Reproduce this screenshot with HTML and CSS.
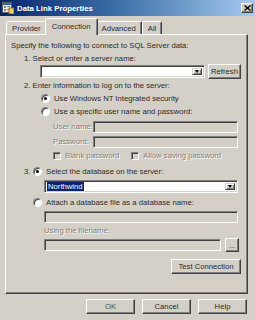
FILE: index.html
```html
<!DOCTYPE html>
<html>
<head>
<meta charset="utf-8">
<link rel="stylesheet" href="styles.css">
</head>
<body>
<div class="win">
  <div class="titlebar">
    <svg class="appicon" width="12" height="12" viewBox="0 0 12 12">
      <rect x="0.5" y="0.5" width="9" height="10" fill="#e8e8e8" stroke="#606060"/>
      <rect x="1" y="1" width="8" height="2" fill="#3060c0"/>
      <rect x="2" y="4" width="2" height="2" fill="#808080"/>
      <rect x="5" y="4" width="3" height="1" fill="#808080"/>
      <rect x="2" y="7" width="2" height="2" fill="#808080"/>
      <rect x="5" y="7" width="3" height="1" fill="#808080"/>
      <rect x="7" y="6" width="5" height="6" fill="#f0d060" stroke="#806000" stroke-width="0.8"/>
    </svg>
    <span class="title">Data Link Properties</span>
    <span class="close">
      <svg width="7" height="6" viewBox="0 0 7 6"><path d="M0.5 0.5 L6.5 5.5 M6.5 0.5 L0.5 5.5" stroke="#000" stroke-width="1.4"/></svg>
    </span>
  </div>

  <div class="tabs">
    <span class="tab">Provider</span>
    <span class="tab sel">Connection</span>
    <span class="tab">Advanced</span>
    <span class="tab">All</span>
  </div>

  <div class="panel">
    <p class="txt intro">Specify the following to connect to SQL Server data:</p>
    <p class="txt step">1. Select or enter a server name:</p>
    <div class="server">
      <div class="combo"><span class="combo-val"></span><span class="ddbtn"><span class="arrow"></span></span></div>
      <span class="btn refresh">Refresh</span>
    </div>
    <p class="txt step">2. Enter information to log on to the server:</p>
    <div class="opt login"><span class="radio on"></span>Use Windows NT Integrated security</div>
    <div class="opt login"><span class="radio"></span>Use a specific user name and password:</div>
    <div class="field"><span class="lbl dis">User name:</span><span class="box"></span></div>
    <div class="field pw"><span class="lbl dis">Password:</span><span class="box"></span></div>
    <div class="checks">
      <span class="chk dis"><span class="check"></span>Blank password</span>
      <span class="chk dis allow"><span class="check"></span>Allow saving password</span>
    </div>
    <div class="opt step3"><span class="num">3.</span><span class="radio on"></span>Select the database on the server:</div>
    <div class="combo db"><span class="combo-val"><span class="selected">Northwind</span></span><span class="ddbtn"><span class="arrow"></span></span></div>
    <div class="opt attach"><span class="radio"></span>Attach a database file as a database name:</div>
    <span class="box attachbox"></span>
    <p class="dis using">Using the filename:</p>
    <div class="filerow"><span class="box"></span><span class="btn dots">...</span></div>
    <div class="testrow"><span class="btn test">Test Connection</span></div>
  </div>

  <div class="buttons">
    <span class="btn dlg ok">OK</span>
    <span class="btn dlg">Cancel</span>
    <span class="btn dlg">Help</span>
  </div>
</div>
</body>
</html>
```

FILE: styles.css
```css
* { box-sizing: border-box; margin: 0; padding: 0; }
html, body { width: 255px; height: 320px; overflow: hidden; }
body {
  background: #d4d0c8;
  font-family: "Liberation Sans", Arial, sans-serif;
  font-size: 7.7px;
  color: #2a2a2a;
}
.win { width: 255px; height: 320px; }

.titlebar {
  height: 16px;
  background: linear-gradient(to right, #0a246a 0%, #3a6ea5 45%, #a6caf0 100%);
  display: flex;
  align-items: center;
  padding: 0 2px 0 2px;
}
.appicon { width: 12px; height: 12px; margin-right: 3px; flex: none; }
.title { color: #fff; font-weight: bold; font-size: 7.8px; flex: 1; }
.close {
  width: 12px; height: 10px;
  background: #d4d0c8;
  border: 1px solid;
  border-color: #fff #404040 #404040 #fff;
  box-shadow: inset -1px -1px #808080;
  display: flex; align-items: center; justify-content: center;
}

.tabs {
  height: 18px;
  display: flex;
  align-items: flex-end;
  padding-left: 6px;
  position: relative;
  z-index: 1;
}
.tab {
  height: 13px;
  padding: 0 5px;
  border: 1px solid;
  border-bottom: none;
  border-color: #fff #404040 transparent #fff;
  border-radius: 2px 2px 0 0;
  box-shadow: inset -1px 0 #808080;
  display: flex;
  align-items: center;
  background: #d4d0c8;
}
.tab.sel {
  height: 17px;
  margin: 0 -2px -1px -2px;
  padding: 0 6px 2px 6px;
  position: relative;
  z-index: 2;
}

.panel {
  margin-left: 5px;
  width: 243px;
  height: 260px;
  border: 1px solid;
  border-color: #fff #404040 #404040 #fff;
  box-shadow: inset -1px -1px #808080;
  padding: 5px 6px 0 5px;
  display: flex;
  flex-direction: column;
}
.txt { height: 12px; line-height: 12px; }
.step { padding-left: 13px; margin-top: 1px; }
.intro { margin-top: 0; }

.box, .combo {
  display: block;
  height: 12px;
  border: 1px solid;
  border-color: #808080 #fff #fff #808080;
  box-shadow: inset 1px 1px #404040, inset -1px -1px #d4d0c8;
  background: #d4d0c8;
}
.combo {
  height: 13px;
  background: #fff;
  display: flex;
  padding: 2px;
}
.combo-val { flex: 1; display: flex; align-items: center; }
.ddbtn {
  width: 10px;
  height: 100%;
  background: #d4d0c8;
  border: 1px solid;
  border-color: #d4d0c8 #404040 #404040 #d4d0c8;
  box-shadow: inset 1px 1px #fff, inset -1px -1px #808080;
  display: flex; align-items: center; justify-content: center;
}
.arrow {
  width: 0; height: 0;
  border-left: 2.5px solid transparent;
  border-right: 2.5px solid transparent;
  border-top: 3px solid #000;
}
.selected { background: #0a246a; color: #fff; padding: 0 1px; line-height: 9px; }

.btn {
  display: flex; align-items: center; justify-content: center;
  background: #d4d0c8;
  border: 1px solid;
  border-color: #fff #404040 #404040 #fff;
  box-shadow: inset -1px -1px #808080;
}

.server { display: flex; align-items: center; height: 15px; padding-left: 29px; margin-top: -1px; }
.server .combo { width: 165px; }
.refresh { width: 33px; height: 15px; margin-left: 3px; }

.opt { height: 13px; display: flex; align-items: center; }
.login { padding-left: 30px; }
.radio {
  width: 9px; height: 9px;
  border-radius: 50%;
  background: #fff;
  border: 1px solid;
  border-color: #808080 #fff #fff #808080;
  box-shadow: inset 1px 1px #404040, 0 0 0 0.5px #d4d0c8;
  margin-right: 4px;
  display: flex; align-items: center; justify-content: center;
  flex: none;
}
.radio.on::after {
  content: "";
  width: 3px; height: 3px; border-radius: 50%; background: #000;
}

.field { display: flex; align-items: center; height: 13px; padding-left: 42px; margin-top: 2px; }
.field .lbl { width: 40px; }
.field .box { width: 145px; }

.dis { color: #808080; text-shadow: 1px 1px 0 #fff; }

.checks { display: flex; align-items: center; height: 13px; padding-left: 42px; margin-top: 1px; }
.chk { display: flex; align-items: center; }
.check {
  width: 8px; height: 8px;
  background: #d4d0c8;
  border: 1px solid;
  border-color: #808080 #fff #fff #808080;
  box-shadow: inset 1px 1px #404040;
  margin-right: 4px;
}
.allow { margin-left: 12px; }

.step3 { padding-left: 13px; margin-top: 3px; }
.num { width: 9px; }
.db { margin-left: 33px; width: 194px; margin-top: 2px; }
.attach { padding-left: 22px; margin-top: 3px; }
.attachbox { margin-left: 33px; width: 194px; margin-top: 2px; }
.using { height: 12px; line-height: 12px; padding-left: 33px; margin-top: 2px; }
.filerow { display: flex; align-items: center; height: 14px; padding-left: 33px; margin-top: 1px; }
.filerow .box { width: 177px; }
.dots { width: 14px; height: 14px; margin-left: 4px; }
.testrow { display: flex; justify-content: flex-end; margin-top: 7px; }
.test { width: 70px; height: 15px; }

.buttons { display: flex; justify-content: flex-end; gap: 7px; padding-right: 8px; margin-top: 5px; }
.dlg { width: 49px; height: 15px; }
.ok { color: #505050; }
```
